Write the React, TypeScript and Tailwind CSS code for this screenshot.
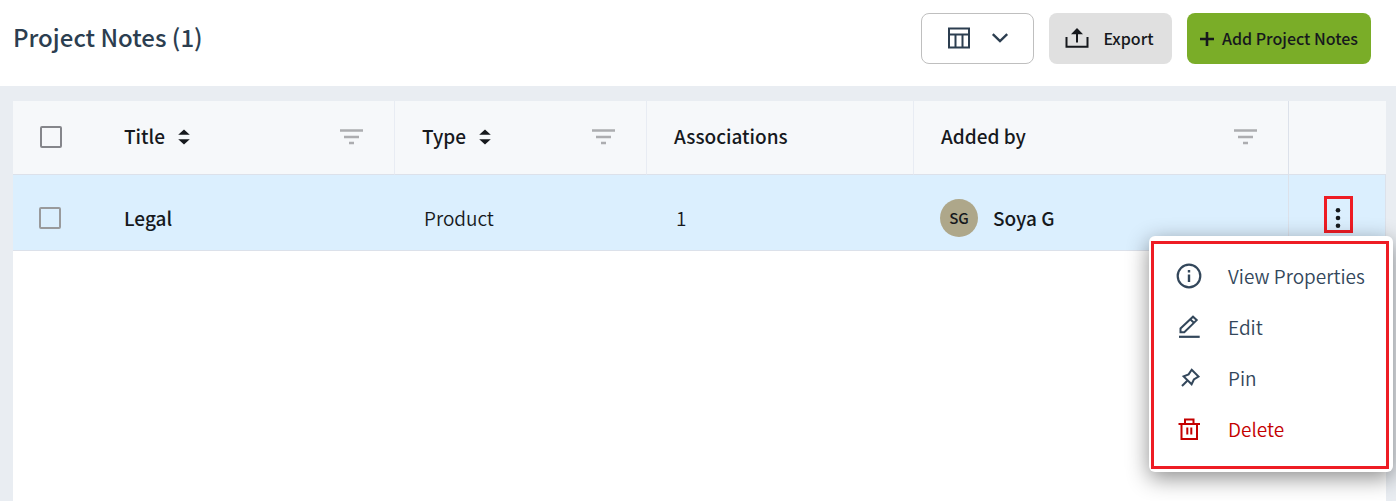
import React, { useState } from 'react';

interface Note {
  id: string;
  title: string;
  type: string;
  associations: number;
  addedBy: string;
  initials: string;
}

const notes: Note[] = [
  { id: 'n1', title: 'Legal', type: 'Product', associations: 1, addedBy: 'Soya G', initials: 'SG' }
];

const ColumnsIcon = () => (
  <svg width="24" height="22" viewBox="0 0 24 22" fill="none" stroke="#2c3e50" strokeWidth="2">
    <path d="M2 1.5h20v19H2zM2 7.5h20M8.5 7.5v13M15.5 7.5v13" />
  </svg>
);

const ChevronIcon = () => (
  <svg width="18" height="12" viewBox="0 0 18 12" fill="none" stroke="#2c3e50" strokeWidth="2.4">
    <path d="M1.8 2.2 9 9.2l7.2-7" />
  </svg>
);

const ExportIcon = () => (
  <svg width="24" height="22" viewBox="0 0 24 22" fill="none" stroke="#16191d" strokeWidth="2">
    <path d="M1.5 10v9.7h21V10M12 15.5V6" />
    <path d="M12 1l6 6.3H6z" fill="#16191d" stroke="none" />
  </svg>
);

const PlusIcon = () => (
  <svg width="14" height="14" viewBox="0 0 14 14" fill="none" stroke="#16191d" strokeWidth="2.6">
    <path d="M7 0v14M0 7h14" />
  </svg>
);

const SortIcon = () => (
  <svg width="12" height="16" viewBox="0 0 12 16" fill="#16191d">
    <path d="M6 0.5l5.8 5.3H0.2zM6 15.500l5.8-5.3H0.2z" />
  </svg>
);

const FilterIcon = () => (
  <svg width="23" height="16" viewBox="0 0 23 16" stroke="#acadb0" strokeWidth="2.6">
    <path d="M0 1.5h23M4 8h15M9 14h5" />
  </svg>
);

const KebabIcon = () => (
  <svg width="6" height="20" viewBox="0 0 6 20" fill="#16191d">
    <circle cx="3" cy="2.3" r="2.3" />
    <circle cx="3" cy="10" r="2.3" />
    <circle cx="3" cy="17.7" r="2.3" />
  </svg>
);

const InfoIcon = () => (
  <svg width="26" height="26" viewBox="0 0 26 26" fill="none" stroke="currentColor" strokeWidth="2.2">
    <circle cx="13" cy="13" r="11.3" />
    <path d="M13 11.5v7.5M13 7v2.5" strokeWidth="2.4" />
  </svg>
);

const EditIcon = () => (
  <svg width="26" height="26" viewBox="0 0 26 26" fill="none" stroke="currentColor" strokeWidth="2">
    <path d="M4.5 18.2v-3.8L17 2.7l3.7 3.4L8.3 18.2zM14.2 5.3l3.7 3.5" />
    <path d="M3 22.8h20.7" strokeWidth="2.2" />
  </svg>
);

const PinIcon = () => (
  <svg width="26" height="26" viewBox="0 0 26 26" fill="none" stroke="currentColor" strokeWidth="2">
    <path d="M15.7 4.8l6.8 6.7-4.6 3-2.300 4.800-8-7.900 5-2z" />
    <path d="M11.300 15.700l-5.300 5.300" />
  </svg>
);

const TrashIcon = () => (
  <svg width="26" height="26" viewBox="0 0 26 26" fill="none" stroke="currentColor" strokeWidth="2">
    <path d="M2.500 8h21.500M9 8V3.500h8.500V8M5.500 8v15h15.500V8M11.300 11.500v7M15.300 11.500v7" />
  </svg>
);

const menuItems = [
  { label: 'View Properties', icon: <InfoIcon />, color: 'text-[#33475b]' },
  { label: 'Edit', icon: <EditIcon />, color: 'text-[#33475b]' },
  { label: 'Pin', icon: <PinIcon />, color: 'text-[#33475b]' },
  { label: 'Delete', icon: <TrashIcon />, color: 'text-[#c40000]' }
];

interface HeadCellProps {
  label: string;
  sortable?: boolean;
  filterable?: boolean;
}

const HeadCell: React.FC<HeadCellProps> = ({ label, sortable, filterable }) => (
  <div className="flex items-center h-[73px] pl-[27px] pr-[31px] pb-0.5">
    <span className="pb-0.5">{label}</span>
    {sortable && (
      <button className="ml-[13px]" aria-label={`Sort by ${label}`}>
        <SortIcon />
      </button>
    )}
    {filterable && (
      <button className="ml-auto" aria-label={`Filter ${label}`}>
        <FilterIcon />
      </button>
    )}
  </div>
);

const App: React.FC = () => {
  const [selected, setSelected] = useState<string[]>([]);
  const [openMenu, setOpenMenu] = useState<string | null>('n1');

  const toggle = (id: string) => {
    setSelected(selected.includes(id) ? selected.filter(s => s !== id) : [...selected, id]);
  };

  return (
    <div className="min-h-screen flex flex-col bg-[#e9edf2] text-[#16191d] font-['Noto_Sans_CJK_SC',sans-serif] text-[19px] leading-7">
      <header className="flex items-start justify-between h-[86px] bg-white pl-[13px] pr-[25px] pt-[13px]">
        <h1 className="text-2xl leading-[47px] font-medium text-[#2c3e50]">Project Notes ({notes.length})</h1>
        <div className="flex gap-[15px] text-base font-medium">
          <button
            aria-label="Choose columns"
            className="flex items-center justify-center gap-5 w-[113px] h-[51px] pb-0.5 border border-[#bfbfbf] rounded-lg"
          >
            <ColumnsIcon />
            <ChevronIcon />
          </button>
          <button className="flex items-center justify-center gap-[14px] w-[123px] h-[51px] pb-0.5 pr-0.5 bg-[#e0e0e0] rounded-lg">
            <ExportIcon /> Export
          </button>
          <button className="flex items-center justify-center gap-2 w-[184px] h-[51px] bg-[#7aad28] rounded-lg whitespace-nowrap">
            <PlusIcon /> <span className="pb-0.5">Add Project Notes</span>
          </button>
        </div>
      </header>

      <main className="flex-1 ml-[13px] mr-[10px] mt-[15px] bg-white">
        <table className="w-full table-fixed border-separate border-spacing-0 text-left">
          <thead>
            <tr className="bg-[#f6f8fa] [&>th]:border-b [&>th]:border-b-[#dce1ea] [&>th]:border-r-[#e8ecf3] [&>th]:p-0 [&>th]:font-medium">
              <th className="w-[84px]">
                <input
                  type="checkbox"
                  aria-label="Select all notes"
                  checked={selected.length === notes.length}
                  onChange={(e) => setSelected(e.target.checked ? notes.map(n => n.id) : [])}
                  className="block ml-[27px] mb-0.5 size-[22px] appearance-none border-2 border-[#85868b] rounded-xs checked:bg-[#85868b]"
                />
              </th>
              <th className="w-[298px] border-r"><HeadCell label="Title" sortable filterable /></th>
              <th className="w-[252px] border-r"><HeadCell label="Type" sortable filterable /></th>
              <th className="w-[267px] border-r"><HeadCell label="Associations" /></th>
              <th><HeadCell label="Added by" filterable /></th>
              <th className="w-[98px] border-l border-l-[#dce1ea]" aria-label="Actions" />
            </tr>
          </thead>
          <tbody>
            {notes.map((note) => (
              <tr key={note.id} className="h-[76px] bg-[#dbeffe] [&>td]:border-b [&>td]:border-[#dce1ea] [&>td]:pt-[10px] [&>td]:pb-0">
                <td className="px-0">
                  <input
                    type="checkbox"
                    aria-label={`Select ${note.title}`}
                    checked={selected.includes(note.id)}
                    onChange={() => toggle(note.id)}
                    className="block ml-[26px] size-[22px] appearance-none border-2 border-[#999a9c] rounded-xs checked:bg-[#999a9c]"
                  />
                </td>
                <td className="px-[27px] font-medium">{note.title}</td>
                <td className="px-[29px] font-[350]">{note.type}</td>
                <td className="px-[29px] font-[350]">{note.associations}</td>
                <td className="px-[26px]">
                  <div className="flex items-center gap-[15px] font-medium">
                    <span className="flex items-center justify-center size-[38px] rounded-full bg-[#aea78a] text-[15px]">
                      {note.initials}
                    </span>
                    {note.addedBy}
                  </div>
                </td>
                <td className="px-0 border-x">
                  <div className="relative ml-[35px] mb-1.5 w-[29px]">
                    <button
                      aria-label="More actions"
                      aria-expanded={openMenu === note.id}
                      onClick={() => setOpenMenu(openMenu === note.id ? null : note.id)}
                      className="flex items-center justify-center w-[29px] h-[37px] pt-1.5 pr-0.5 border-3 border-[#ee1c24]"
                    >
                      <KebabIcon />
                    </button>
                    {openMenu === note.id && (
                      <div className="absolute z-10 top-10 -right-10 w-[244px] pt-[5px] pl-[2px] pr-1 pb-[3px] bg-white rounded-md shadow-[0_6px_22px_rgba(0,0,0,0.45)]">
                        <div role="menu" className="border-3 border-[#ee1c24] pt-1.5 pb-3">
                          {menuItems.map((item) => (
                            <button
                              key={item.label}
                              role="menuitem"
                              className={`flex items-center gap-[26px] w-full h-[51px] pl-[22px] font-[350] whitespace-nowrap ${item.color}`}
                            >
                              {item.icon}
                              {item.label}
                            </button>
                          ))}
                        </div>
                      </div>
                    )}
                  </div>
                </td>
              </tr>
            ))}
          </tbody>
        </table>
      </main>
    </div>
  );
};

export default App;
